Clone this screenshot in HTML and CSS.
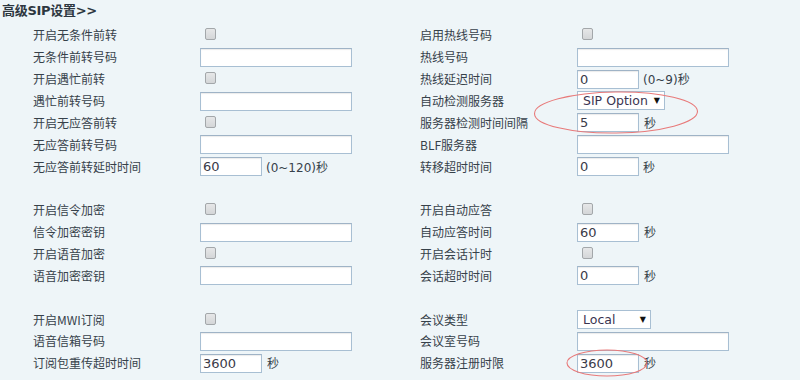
FILE: index.html
```html
<!DOCTYPE html>
<html lang="zh">
<head>
<meta charset="utf-8">
<link rel="stylesheet" href="styles.css">
</head>
<body>
<div class="page">
  <div class="title">高级SIP设置&gt;&gt;</div>
  <div class="form">
    <div class="col col-left">
      <div class="row"><span class="label">开启无条件前转</span><span class="ctl"><span class="cb"></span></span></div>
      <div class="row"><span class="label">无条件前转号码</span><span class="ctl"><input class="inp" type="text"></span></div>
      <div class="row"><span class="label">开启遇忙前转</span><span class="ctl"><span class="cb"></span></span></div>
      <div class="row"><span class="label">遇忙前转号码</span><span class="ctl"><input class="inp" type="text"></span></div>
      <div class="row"><span class="label">开启无应答前转</span><span class="ctl"><span class="cb"></span></span></div>
      <div class="row"><span class="label">无应答前转号码</span><span class="ctl"><input class="inp" type="text"></span></div>
      <div class="row"><span class="label">无应答前转延时时间</span><span class="ctl"><input class="inp short" type="text" value="60"><span class="unit">(0~120)秒</span></span></div>
      <div class="row"></div>
      <div class="row"><span class="label">开启信令加密</span><span class="ctl"><span class="cb"></span></span></div>
      <div class="row"><span class="label">信令加密密钥</span><span class="ctl"><input class="inp" type="text"></span></div>
      <div class="row"><span class="label">开启语音加密</span><span class="ctl"><span class="cb"></span></span></div>
      <div class="row"><span class="label">语音加密密钥</span><span class="ctl"><input class="inp" type="text"></span></div>
      <div class="row"></div>
      <div class="row"><span class="label">开启MWI订阅</span><span class="ctl"><span class="cb"></span></span></div>
      <div class="row"><span class="label">语音信箱号码</span><span class="ctl"><input class="inp" type="text"></span></div>
      <div class="row"><span class="label">订阅包重传超时时间</span><span class="ctl"><input class="inp short" type="text" value="3600"><span class="unit sp">秒</span></span></div>
    </div>
    <div class="col col-right">
      <div class="row"><span class="label">启用热线号码</span><span class="ctl"><span class="cb"></span></span></div>
      <div class="row"><span class="label">热线号码</span><span class="ctl"><input class="inp" type="text"></span></div>
      <div class="row"><span class="label">热线延迟时间</span><span class="ctl"><input class="inp short" type="text" value="0"><span class="unit">(0~9)秒</span></span></div>
      <div class="row"><span class="label">自动检测服务器</span><span class="ctl"><span class="sel sel-sip">SIP Option<span class="arrow">▼</span></span></span></div>
      <div class="row"><span class="label">服务器检测时间间隔</span><span class="ctl"><input class="inp short" type="text" value="5"><span class="unit sp">秒</span></span></div>
      <div class="row"><span class="label">BLF服务器</span><span class="ctl"><input class="inp" type="text"></span></div>
      <div class="row"><span class="label">转移超时时间</span><span class="ctl"><input class="inp short" type="text" value="0"><span class="unit">秒</span></span></div>
      <div class="row"></div>
      <div class="row"><span class="label">开启自动应答</span><span class="ctl"><span class="cb"></span></span></div>
      <div class="row"><span class="label">自动应答时间</span><span class="ctl"><input class="inp short" type="text" value="60"><span class="unit sp">秒</span></span></div>
      <div class="row"><span class="label">开启会话计时</span><span class="ctl"><span class="cb"></span></span></div>
      <div class="row"><span class="label">会话超时时间</span><span class="ctl"><input class="inp short" type="text" value="0"><span class="unit sp">秒</span></span></div>
      <div class="row"></div>
      <div class="row"><span class="label">会议类型</span><span class="ctl"><span class="sel sel-local">Local<span class="arrow">▼</span></span></span></div>
      <div class="row"><span class="label">会议室号码</span><span class="ctl"><input class="inp" type="text"></span></div>
      <div class="row"><span class="label">服务器注册时限</span><span class="ctl"><input class="inp short" type="text" value="3600"><span class="unit sp">秒</span></span></div>
    </div>
  </div>
  <svg class="marks" width="800" height="380" viewBox="0 0 800 380">
    <ellipse cx="616" cy="112.5" rx="81.5" ry="20.5" fill="none" stroke="#e87a7a" stroke-width="1.1" transform="rotate(-0.8 616 112.5)"/>
    <ellipse cx="607" cy="363" rx="40" ry="13" fill="none" stroke="#e87a7a" stroke-width="1.1"/>
  </svg>
</div>
</body>
</html>
```
FILE: styles.css
```css
html, body {
  margin: 0;
  padding: 0;
  background: #eef5f8;
}
.page {
  position: relative;
  width: 800px;
  height: 380px;
  overflow: hidden;
  font-family: "Noto Sans CJK SC", "Noto Sans", sans-serif;
  font-size: 12px;
  color: #36414a;
}
.title {
  height: 24px;
  line-height: 22px;
  padding-left: 2px;
  font-family: "DejaVu Sans", "Noto Sans CJK SC", sans-serif;
  font-weight: bold;
  font-size: 13px;
  color: #2d3740;
  letter-spacing: -0.3px;
}
.form {
  display: flex;
}
.col-left {
  width: 420px;
  padding-left: 33px;
  box-sizing: border-box;
}
.col-left .label {
  width: 167px;
}
.col-right .label {
  width: 157px;
}
.row {
  height: 21.87px;
  display: flex;
  align-items: center;
}
.label {
  flex: none;
  white-space: nowrap;
}
.ctl {
  display: flex;
  align-items: center;
}
.cb {
  display: block;
  width: 9px;
  height: 10px;
  margin-left: 5px;
  margin-top: -1px;
  border: 1px solid #a3a7aa;
  border-radius: 2px;
  background: linear-gradient(#e6e7e8, #d4d6d8);
}
.inp {
  box-sizing: border-box;
  width: 152px;
  height: 19px;
  margin: 1px 0 0 0;
  padding: 0 2px;
  border: 1px solid #a8bfd3;
  border-top-color: #9fb3c6;
  background: #fff;
  box-shadow: inset 0 1px 1px rgba(0,0,0,0.08);
  font-family: "DejaVu Sans", sans-serif;
  font-size: 13px;
  color: #3a3a48;
  outline: none;
}
.inp.short {
  width: 62px;
}
.unit {
  margin-left: 4px;
  white-space: nowrap;
  font-family: "DejaVu Sans", "Noto Sans CJK SC", sans-serif;
  font-size: 12px;
}
.unit.sp {
  margin-left: 5px;
}
.sel {
  box-sizing: border-box;
  height: 19px;
  display: flex;
  align-items: center;
  justify-content: space-between;
  padding: 0 4px 0 5px;
  border: 1px solid #a8bfd3;
  background: #fff;
  font-family: "DejaVu Sans", sans-serif;
  font-size: 12.5px;
  color: #3a3450;
}
.sel-sip {
  width: 88px;
}
.sel-local {
  width: 74px;
}
.arrow {
  font-size: 8px;
  color: #111;
  margin-left: 4px;
}
.marks {
  position: absolute;
  left: 0;
  top: 0;
  pointer-events: none;
}
```
